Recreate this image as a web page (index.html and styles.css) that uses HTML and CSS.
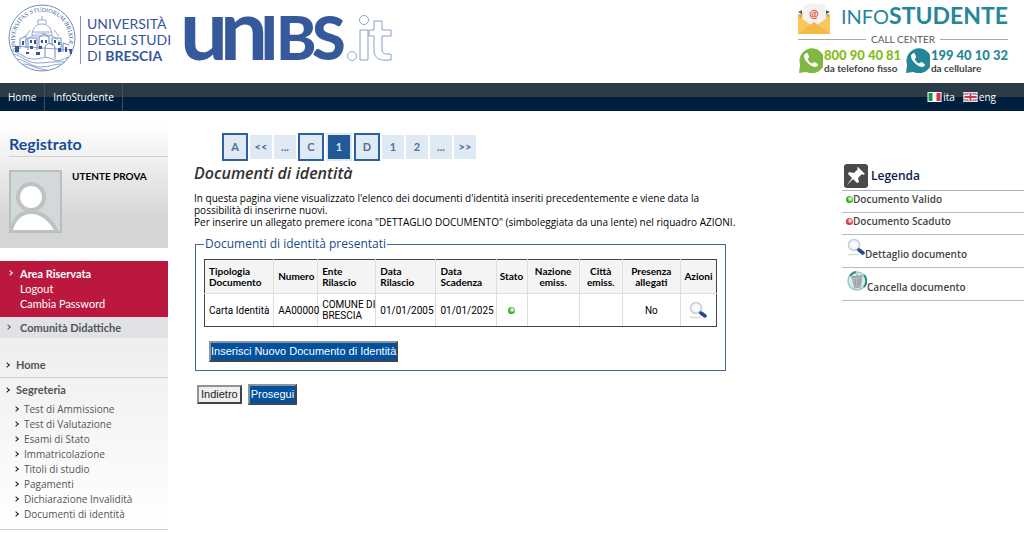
FILE: index.html
```html
<!DOCTYPE html>
<html lang="it">
<head>
<meta charset="utf-8">
<title>Documenti di identità</title>
<link rel="stylesheet" href="styles.css">
</head>
<body>
<svg class="defs" width="0" height="0" aria-hidden="true">
  <defs>
    <radialGradient id="lens"><stop offset="0" stop-color="#fff"/><stop offset="1" stop-color="#edf1f6"/></radialGradient>
    <symbol id="magnifier" viewBox="0 0 18 18">
      <path d="M1 16.500h11" stroke="#d9d9d9" stroke-width="1.500"/>
      <circle cx="7" cy="7" r="5.500" fill="url(#lens)" stroke="#c9ccd2" stroke-width="1.500"/>
      <path d="M10.500 10.500l2 2" stroke="#8aa0bd" stroke-width="2"/>
      <path d="M12 12l4 3" stroke="#1d4d8c" stroke-width="3.500" stroke-linecap="round"/>
    </symbol>
    <symbol id="handset" viewBox="0 0 24 24">
      <path d="M1 24l1-8A12 12 0 1 1 8 23z"/>
      <path d="M7 5.500c-2 1.500-1.500 4.500 1.500 8s6.500 5.500 9 4.500c2-1 2-2.500 1-3l-2.500-1.500c-1-.5-1.500 1.200-2.500 1.200-1.500 0-4-3-4-4.200 0-1 1.500-1 1.200-2.200L9.500 5.500C9 4.500 8 4.800 7 5.500z" fill="#fff"/>
    </symbol>
  </defs>
</svg>

<header class="header">
  <a class="brand" href="#" aria-label="Università degli Studi di Brescia">
    <svg class="seal" viewBox="0 0 68 68" aria-hidden="true">
      <defs><path id="ring" d="M9 45A27 27 0 1 1 59 45"/></defs>
      <g fill="none" stroke="#6f8bc0">
        <circle cx="34" cy="34" r="33" stroke-width="1"/>
        <path d="M13 43a23 23 0 0 1 42 0" stroke="#b4c2de"/>
        <path d="M24 32c0-8 4-12 10-12s10 4 10 12zM30 20v-4h8v4M34 16v-4M22 26l-4 6M46 26l5 6M25 28h18" stroke="#93a8d0"/>
        <path d="M3 46c9 3 13 8 21 9s13-4 20 0 10 0 17-2M5 50c10 2 14 9 24 9s18-2 28-1M9 55c9 1 14 8 24 8 8 0 13-3 20-3M15 60c8 0 12 5 24 6M4 42l60 4" stroke-width=".8"/>
        <path d="M12 45v-10l6-3v12M20 46V34h9v12M31 45V33l5-3 5 3v6M44 42v-8h9v14M55 48v-9l6 2M37 53v-9c0-6 10-6 10 0v11" stroke-width="1"/>
      </g>
      <g fill="#36569c">
        <path d="M14 37h2v4h-2zM22 36h2v3h-2zM26 36h2v4h-2zM22 42h3v3h-3zM33 36h2v3h-2zM37 36h2v3h-2zM31 42h3v3h-3zM46 36h2v3h-2zM50 38h2v3h-2zM50 44h3v4h-3zM57 43h2v5h-2zM7 42h4v6H7zM28 48h4v3h-4zM18 48h3v2h-3zM61 45h3v5h-2z"/>
      </g>
      <text class="seal-text"><textPath href="#ring" startOffset="0">UNIVERSITAS·STUDIORUM·BRIXIÆ</textPath></text>
    </svg>
    <span class="brand-name">UNIVERSITÀ<br>DEGLI STUDI<br>DI <b>BRESCIA</b></span>
    <svg class="wordmark" viewBox="0 0 210 60" aria-hidden="true">
      <text class="wordmark-bold" y="50"><tspan class="tall" x="-5 35">un</tspan><tspan class="caps" x="75 91 127">IBS</tspan></text>
      <g fill="#fff" stroke="#6c88c0" stroke-width=".8">
        <circle cx="167" cy="46" r="4.500"/><circle cx="179" cy="10" r="4.500"/>
        <path d="M175 20h8v30h-8zM189 11h8v9h9v6h-9v14q0 5 9 4v6q-17 2-17-9V26h-5v-6h5z"/>
      </g>
    </svg>
  </a>
  <section class="callcenter" aria-label="InfoStudente call center">
    <div class="cc-top">
      <svg class="mail" viewBox="0 0 32 32" aria-hidden="true">
        <path d="M0 12l16-9 16 9v19H0z" fill="#eda936"/><path d="M5 3l8-3 14 2 2 16-13 7-12-7z" fill="#f2f2f3"/>
        <text class="at" x="16" y="15" text-anchor="middle">@</text>
        <path d="M0 13l16 11L32 13v18H0z" fill="#f9c65a"/><path d="M0 31l16-12 16 12z" fill="#f5b846"/>
        <path d="M0 9l4-2v4zM32 9l-4-2v4z" fill="#416273"/>
      </svg>
      <span class="cc-title"><span class="cc-light">INFO</span><b>STUDENTE</b></span>
    </div>
    <div class="cc-label">CALL CENTER</div>
    <div class="cc-phones">
      <div class="phone green"><svg aria-hidden="true"><use href="#handset"/></svg><p><b>800 90 40 81</b>da telefono fisso</p></div>
      <div class="phone teal"><svg aria-hidden="true"><use href="#handset"/></svg><p><b>199 40 10 32</b>da cellulare</p></div>
    </div>
  </section>
</header>

<nav class="topnav">
  <a href="#">Home</a><a href="#">InfoStudente</a>
  <div class="langs">
    <a href="#"><svg viewBox="0 0 14 10" aria-hidden="true"><path fill="#fff" d="M0 0h14v10H0z"/><path fill="#169246" d="M1 1h4v8H1z"/><path fill="#d62e3b" d="M9 1h4v8H9z"/></svg>ita</a>
    <a href="#"><svg viewBox="0 0 14 10" aria-hidden="true"><path fill="#34477f" d="M0 0h14v10H0z"/><path d="M0 0l14 10M14 0L0 10" stroke="#fff" stroke-width="2"/><path d="M0 0l14 10M14 0L0 10" stroke="#ca3d50"/><path d="M7 0v10M0 5h14" stroke="#fff" stroke-width="4"/><path d="M7 0v10M0 5h14" stroke="#ca3d50" stroke-width="2"/><path d="M.5.5h13v9H.5z" fill="none" stroke="#e7dce3"/></svg>eng</a>
  </div>
</nav>

<div class="layout">
  <aside class="sidebar">
    <section class="user">
      <h2>Registrato</h2>
      <div class="user-row">
        <svg class="avatar" viewBox="0 0 53 63" aria-hidden="true">
          <path fill="#d3d9db" d="M1 1h51v61H1z"/>
          <path d="M1 62C5 48 13 42 22 42s20 6 26 20z" fill="#fff" stroke="#bec2c3" stroke-width="4"/>
          <circle cx="22" cy="27" r="13" fill="#fff" stroke="#bec2c3" stroke-width="4"/>
          <path fill="none" stroke="#b9bfc1" stroke-width="2" d="M1 1h51v61H1z"/>
        </svg>
        <strong>UTENTE PROVA</strong>
      </div>
    </section>
    <nav class="reserved">
      <a class="arrow" href="#"><b>Area Riservata</b></a>
      <a href="#">Logout</a>
      <a href="#">Cambia Password</a>
    </nav>
    <a class="community arrow" href="#">Comunità Didattiche</a>
    <nav class="menu">
      <a class="menu-home arrow" href="#">Home</a>
      <a class="menu-head arrow" href="#">Segreteria</a>
      <ul>
        <li><a class="arrow" href="#">Test di Ammissione</a></li>
        <li><a class="arrow" href="#">Test di Valutazione</a></li>
        <li><a class="arrow" href="#">Esami di Stato</a></li>
        <li><a class="arrow" href="#">Immatricolazione</a></li>
        <li><a class="arrow" href="#">Titoli di studio</a></li>
        <li><a class="arrow" href="#">Pagamenti</a></li>
        <li><a class="arrow" href="#">Dichiarazione Invalidità</a></li>
        <li><a class="arrow" href="#">Documenti di identità</a></li>
      </ul>
    </nav>
  </aside>

  <main class="content">
    <nav class="steps" aria-label="Passi">
      <a class="block" href="#">A</a><a href="#">&lt;&lt;</a><a href="#">...</a><a class="block" href="#">C</a><a class="current" href="#" aria-current="step">1</a><a class="block" href="#">D</a><a href="#">1</a><a href="#">2</a><a href="#">...</a><a href="#">&gt;&gt;</a>
    </nav>
    <h1>Documenti di identità</h1>
    <p class="intro">In questa pagina viene visualizzato l'elenco dei documenti d'identità inseriti precedentemente e viene data la<br>possibilità di inserirne nuovi.<br>Per inserire un allegato premere icona "DETTAGLIO DOCUMENTO" (simboleggiata da una lente) nel riquadro AZIONI.</p>
    <fieldset>
      <legend>Documenti di identità presentati</legend>
      <table>
        <colgroup><col class="c-type"><col class="c-num"><col class="c-org"><col class="c-date"><col class="c-date"><col class="c-state"><col class="c-nation"><col class="c-city"><col class="c-files"><col class="c-act"></colgroup>
        <thead><tr><th>Tipologia<br>Documento</th><th>Numero</th><th>Ente<br>Rilascio</th><th>Data<br>Rilascio</th><th>Data<br>Scadenza</th><th class="mid">Stato</th><th class="mid">Nazione<br>emiss.</th><th class="mid">Città<br>emiss.</th><th class="mid">Presenza<br>allegati</th><th class="mid">Azioni</th></tr></thead>
        <tbody><tr><td>Carta Identità</td><td>AA00000</td><td>COMUNE DI<br>BRESCIA</td><td>01/01/2005</td><td>01/01/2025</td><td class="mid"><span class="dot valid"></span></td><td></td><td></td><td class="mid">No</td><td class="mid"><a href="#" aria-label="Dettaglio documento"><svg class="lens" aria-hidden="true"><use href="#magnifier"/></svg></a></td></tr></tbody>
      </table>
      <button class="primary" type="button">Inserisci Nuovo Documento di Identità</button>
    </fieldset>
    <div class="actions">
      <button class="plain" type="button">Indietro</button>
      <button class="primary" type="button">Prosegui</button>
    </div>
  </main>

  <aside class="legend">
    <h2><svg viewBox="0 0 24 24" aria-hidden="true"><rect width="24" height="24" rx="3" fill="#4a4a4a"/><path d="M14 3l7 7-2 1-1-1-4 4 1 4-2 1-4-4-6 6 5-7-4-4 1-2 5 1 4-4-1-1z" fill="#fff"/></svg>Legenda</h2>
    <ul>
      <li><span class="dot valid"></span>Documento Valido</li>
      <li><span class="dot expired"></span>Documento Scaduto</li>
      <li class="tall-row"><svg class="lens" aria-hidden="true"><use href="#magnifier"/></svg>Dettaglio documento</li>
      <li class="tall-row"><svg class="trash" viewBox="0 0 20 20" aria-hidden="true"><circle cx="10" cy="10" r="9" fill="#dcebea" stroke="#9bc8c4" stroke-width="1.500"/><path d="M3 5a9 9 0 0 1 6-4M17 4a9 9 0 0 1 0 12" fill="none" stroke="#2d8f87" stroke-width="2"/><path d="M5 6l10-1-1.500 11-6 1z" fill="#b5bcbf" stroke="#8a9598" stroke-width=".7"/><path d="M4.500 6l10.500-1.500M9 4l2-.5M8 8l1 7M11 7.500v7M13 7.500l-.5 6" stroke="#7d8a8e" stroke-width=".7" fill="none"/></svg>Cancella documento</li>
    </ul>
  </aside>
</div>
</body>
</html>
```

FILE: styles.css
```css
* { box-sizing: border-box; }
body { margin: 0; background: #fff; color: #000; font: 11px/12px "Trebuchet MS", Lato, "Noto Sans", sans-serif; }
a { color: inherit; text-decoration: none; }
h1, h2, p, ul { margin: 0; padding: 0; }
ul { list-style: none; }
.defs { position: absolute; }

.header { display: flex; justify-content: space-between; height: 83px; padding: 0 16px 0 8px; }
.brand { display: flex; align-items: flex-start; color: #36569c; }
.seal { width: 68px; height: 68px; margin-top: 4px; overflow: visible; }
.seal-text { font: 6px "Liberation Serif", serif; fill: #36569c; }
.brand-name { margin: 16px 0 0 4px; padding-left: 6px; border-left: 1px solid #8096c5; font: 14px/16px Lato, sans-serif; width: 99px; white-space: nowrap; }
.wordmark { width: 210px; height: 60px; margin: 10px 0 0 6px; overflow: visible; }
.wordmark-bold { fill: #36599b; font-family: Lato, sans-serif; font-weight: 700; }
.tall { font-size: 85px; }
.caps { font-size: 61px; font-weight: 900; }

.callcenter { width: 210px; padding-top: 3px; font-family: Lato, sans-serif; }
.cc-top { display: flex; justify-content: space-between; align-items: flex-start; color: #26869b; }
.mail { width: 32px; height: 32px; }
.at { font: bold 11px Lato, sans-serif; fill: #e2573d; }
.cc-title { font-size: 23px; line-height: 24px; }
.cc-light { font-size: 20px; }
.cc-label { display: flex; align-items: center; gap: 5px; color: #555; font-size: 10px; line-height: 8px; }
.cc-label::before, .cc-label::after { content: ""; flex: 1; border-top: 1px solid #aaa; }
.cc-phones { display: flex; justify-content: space-between; padding-top: 5px; white-space: nowrap; }
.phone { display: flex; gap: 1px; font-size: 10px; line-height: 12px; }
.phone svg { width: 25px; height: 25px; flex: none; }
.phone p { color: #444; font-weight: 700; }
.phone b { display: block; font-size: 13px; line-height: 14px; }
.green svg { fill: #7fb943; }
.green b { color: #87bd17; }
.teal svg { fill: #25869a; }
.teal b { color: #25869a; }

.topnav { display: flex; height: 28px; background: linear-gradient(#2b3b48 50%, #001f3c 50%); color: #fff; font: 10px/28px "Trebuchet MS", "Open Sans", sans-serif; }
.topnav > a { padding: 0 8px; border-right: 1px solid #3f5060; }
.langs { display: flex; gap: 8px; margin-left: auto; padding-right: 28px; line-height: 26px; }
.langs a { display: flex; align-items: center; gap: 1px; }
.langs svg { width: 15px; height: 10px; }

.layout { display: grid; grid-template-columns: 168px minmax(0, 1fr) 182px; }
.user { height: 137px; padding: 23px 0 0 9px; background: linear-gradient(#fff 10%, #d5d5d5 80%); }
.user h2 { padding-bottom: 2px; border-bottom: 1px solid #d0d3d6; color: #174c98; font-size: 16px; line-height: 20px; }
.user-row { display: flex; gap: 10px; padding-top: 13px; font-size: 10px; }
.avatar { width: 53px; height: 63px; }
.reserved { margin-top: 13px; padding: 5px 0 6px 20px; background: #bb1840; color: #fff; line-height: 15px; }
.reserved a { display: block; }
.arrow { position: relative; }
.arrow::before { content: ""; position: absolute; left: -12px; top: 5px; width: 3px; height: 3px; border: solid currentColor; border-width: 1px 1px 0 0; transform: rotate(45deg); }
.community { display: block; padding-left: 20px; background: #e0e2e6; color: #555; font-weight: 700; line-height: 21px; }
.community::before { left: 6px; top: 8px; }
.menu { padding-top: 15px; border-bottom: 1px solid #c8c8c8; background: linear-gradient(#eee, #fff); color: #555; }
.menu-home, .menu-head { display: block; padding-left: 16px; font-weight: 700; line-height: 24px; }
.menu-home { border-bottom: 1px solid #ccc; }
.menu-home::before, .menu-head::before { left: 5px; top: 10px; border-color: #123; }
.menu ul { padding: 0 0 7px 24px; font: 10px/15px "Trebuchet MS", "Open Sans", sans-serif; }
.menu li .arrow::before { left: -10px; border-color: #123; }

.content { padding: 21px 0 0 26px; max-width: 700px; }
.steps { display: flex; align-items: center; gap: 2px; height: 30px; padding-left: 28px; color: #4e7096; font-weight: 700; text-align: center; }
.steps a { width: 22px; background: #e0eaf5; line-height: 24px; }
.steps .block { width: 26px; border: 2px solid #2d609e; }
.steps .current { width: 26px; border: 2px solid #e0eaf5; background: #225999; color: #dce9f6; }
h1 { color: #333; font: italic 600 16px/22px "Trebuchet MS", "Open Sans", sans-serif; }
.intro { padding-top: 8px; font: 10px/12px "Trebuchet MS", "Open Sans", sans-serif; white-space: nowrap; }
fieldset { width: 531px; margin: 9px 0 0 1px; padding: 8px; border: 1px solid #42689a; }
legend { padding: 0 1px; color: #174c8d; font: 12px/14px "Trebuchet MS", "Open Sans", sans-serif; }
table { width: 100%; table-layout: fixed; border: 1px solid #444; border-collapse: collapse; font-size: 10px; line-height: 11px; white-space: nowrap; }
th, td { height: 33px; padding: 0 0 0 4px; border: 1px solid #ddd; text-align: left; }
th { height: 34px; background: #f4f4f4; }
tbody { font-family: "Trebuchet MS", Roboto, sans-serif; }
thead th { border-top-color: #444; }
tbody td { border-bottom-color: #444; }
th:first-child, td:first-child { border-left-color: #444; }
th:last-child, td:last-child { border-right-color: #444; }
.mid { padding: 0; text-align: center; }
.c-type { width: 69px; }
.c-num { width: 44px; }
.c-org { width: 58px; }
.c-date { width: 60px; }
.c-state { width: 31px; }
.c-nation { width: 52px; }
.c-city { width: 43px; }
.c-files { width: 58px; }
.c-act { width: 36px; }
.lens { width: 18px; height: 18px; vertical-align: middle; }
.dot { display: inline-block; width: 7px; height: 7px; border-radius: 50%; }
.valid { background: radial-gradient(circle at 60% 40%, #d9ffd2 10%, #37b927 50%, #167a10); }
.expired { background: radial-gradient(circle at 60% 40%, #ffdcdc 10%, #dc3f40 50%, #a31d1d); }
button { border: 2px outset #8d949d; font: 11px/17px "Liberation Sans", Arial, sans-serif; padding: 0 1px; white-space: nowrap; }
.primary { background: #00519e; color: #fff; }
.plain { background: #efefef; color: #222; line-height: 15px; padding: 0 2px; }
fieldset .primary { display: block; margin: 14px 0 0 5px; padding: 0; }
.actions { display: flex; align-items: center; gap: 6px; padding: 13px 0 0 3px; }

.legend { padding-top: 53px; color: #444; font: 600 10px/12px "Trebuchet MS", "Open Sans", sans-serif; }
.legend h2 { display: flex; align-items: center; gap: 3px; height: 27px; padding: 0 0 2px 2px; border-bottom: 1px solid #aab2be; color: #0b1b4d; font-size: 12px; font-weight: 600; }
.legend h2 svg { width: 24px; height: 24px; }
.legend li { display: flex; height: 22px; align-items: center; padding: 0 0 5px 4px; border-bottom: 1px solid #b8bcc4; }
.legend .tall-row { height: 33px; align-items: flex-end; padding: 0 0 7px 5px; }
.tall-row .lens, .tall-row .trash { align-self: flex-start; margin-top: 3px; }
.trash { width: 20px; height: 20px; }
```
